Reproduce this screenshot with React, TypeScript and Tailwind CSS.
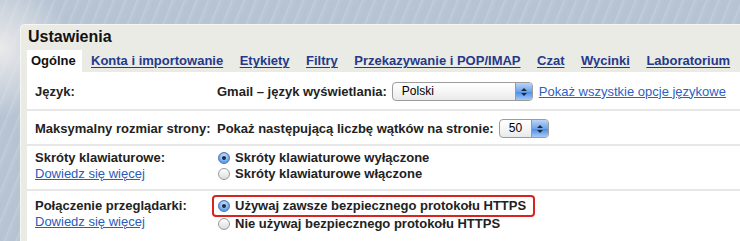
import React from "react";

const font = { fontFamily: '"Liberation Sans", Arial, sans-serif' };

function Radio({ checked }: { checked?: boolean }) {
  return checked ? (
    <span className="relative inline-block w-[12px] h-[12px] rounded-full border border-[#4a78b8] bg-[radial-gradient(circle_at_50%_35%,#d7e8fb,#78aef0_55%,#3f7fd6)] shrink-0">
      <span className="absolute left-[3px] top-[3px] w-[4px] h-[4px] rounded-full bg-[#1b2a44]" />
    </span>
  ) : (
    <span className="inline-block w-[12px] h-[12px] rounded-full border border-[#9a9a9a] bg-[linear-gradient(#ffffff,#dcdcdc)] shrink-0" />
  );
}

function Select({ value, width }: { value: string; width: string }) {
  return (
    <span
      className={`${width} h-[19px] flex items-stretch rounded-[4px] border border-[#9c9c9c] bg-[linear-gradient(#ffffff,#f6f6f6_50%,#e9e9e9)] overflow-hidden shrink-0`}
    >
      <span className="flex-1 pl-[9px] text-[12px] leading-[17px] font-normal text-black">{value}</span>
      <span className="w-[17px] flex flex-col items-center justify-center gap-[2px] border-l border-[#7f9fc8] bg-[linear-gradient(#b9d5f7,#6ea4ea_50%,#4f8ee6_55%,#a5cbf6)]">
        <span className="w-0 h-0 border-l-[3px] border-r-[3px] border-b-[3px] border-l-transparent border-r-transparent border-b-[#1e2a3a]" />
        <span className="w-0 h-0 border-l-[3px] border-r-[3px] border-t-[3px] border-l-transparent border-r-transparent border-t-[#1e2a3a]" />
      </span>
    </span>
  );
}

function Sep() {
  return <div className="h-[2px] bg-[#e7e7e7]" />;
}

export default function App() {
  const tabs = [
    "Konta i importowanie",
    "Etykiety",
    "Filtry",
    "Przekazywanie i POP/IMAP",
    "Czat",
    "Wycinki",
    "Laboratorium",
  ];
  return (
    <div
      style={font}
      className="w-[740px] h-[241px] overflow-hidden pt-[24px] pl-[20px] bg-[radial-gradient(circle_at_0%_20%,rgba(236,236,236,0.95),rgba(236,236,236,0)_70px),repeating-linear-gradient(112deg,#b6c3d3_0px,#b6c3d3_5px,#c2cdda_6px,#b9c6d5_8px,#b6c3d3_11px),linear-gradient(#aebdd0,#a9bcd4)]"
    >
      <div className="h-full bg-[#ebebe5] rounded-tl-[5px] border-t border-l border-[#f6f6f2] pl-[6px] text-[#222] text-[13px] font-bold">
        <div className="h-[25px] leading-[23px] text-[16px] pl-[1px] text-[#111]">Ustawienia</div>
        <div className="h-[22px] flex items-stretch leading-[22px]">
          <div className="bg-white px-[4px] w-[55px] text-[#111]">Ogólne</div>
          <div className="flex pl-[1px] gap-[0.5px]">
            {tabs.map((t) => (
              <a key={t} className="px-[8px] text-[#24398a] underline decoration-1 underline-offset-[2px] cursor-pointer">
                {t}
              </a>
            ))}
          </div>
        </div>
        <div className="bg-white h-full">
          {/* Row 1 */}
          <div className="flex pt-[10px] pb-[8px] h-[37px]">
            <div className="w-[190px] pl-[8px] leading-[19px] shrink-0">Język:</div>
            <div className="flex items-center gap-[5px] h-[19px] whitespace-nowrap">
              <span>Gmail – język wyświetlania:</span>
              <Select value="Polski" width="w-[141px]" />
              <a className="ml-[1px] font-normal text-[#2f5fbf] underline">Pokaż wszystkie opcje językowe</a>
            </div>
          </div>
          <Sep />
          {/* Row 2 */}
          <div className="flex pt-[8px] pb-[6px] h-[33px]">
            <div className="w-[190px] pl-[8px] leading-[19px] shrink-0 whitespace-nowrap">Maksymalny rozmiar strony:</div>
            <div className="flex items-center gap-[5px] h-[19px] whitespace-nowrap">
              <span>Pokaż następującą liczbę wątków na stronie:</span>
              <Select value="50" width="w-[50px]" />
            </div>
          </div>
          <Sep />
          {/* Row 3 */}
          <div className="flex pt-[4px] h-[43px] leading-[16px]">
            <div className="w-[190px] pl-[8px] shrink-0">
              <div>Skróty klawiaturowe:</div>
              <a className="font-normal text-[#2a5cb8] underline">Dowiedz się więcej</a>
            </div>
            <div className="pl-[1px]">
              <div className="flex items-center gap-[5px]">
                <Radio checked />
                <span>Skróty klawiaturowe wyłączone</span>
              </div>
              <div className="flex items-center gap-[5px]">
                <Radio />
                <span>Skróty klawiaturowe włączone</span>
              </div>
            </div>
          </div>
          <Sep />
          {/* Row 4 */}
          <div className="flex pt-[4px] leading-[16px]">
            <div className="w-[190px] pl-[8px] pt-[3px] shrink-0">
              <div>Połączenie przeglądarki:</div>
              <a className="font-normal text-[#2a5cb8] underline">Dowiedz się więcej</a>
            </div>
            <div className="-ml-[5px]">
              <div className="flex items-center gap-[5px] h-[22px] border-2 border-[#d8231f] rounded-[4px] pl-[4px] pr-[7px]">
                <Radio checked />
                <span>Używaj zawsze bezpiecznego protokołu HTTPS</span>
              </div>
              <div className="flex items-center gap-[5px] pl-[6px] -mt-[1px]">
                <Radio />
                <span>Nie używaj bezpiecznego protokołu HTTPS</span>
              </div>
            </div>
          </div>
        </div>
      </div>
    </div>
  );
}
